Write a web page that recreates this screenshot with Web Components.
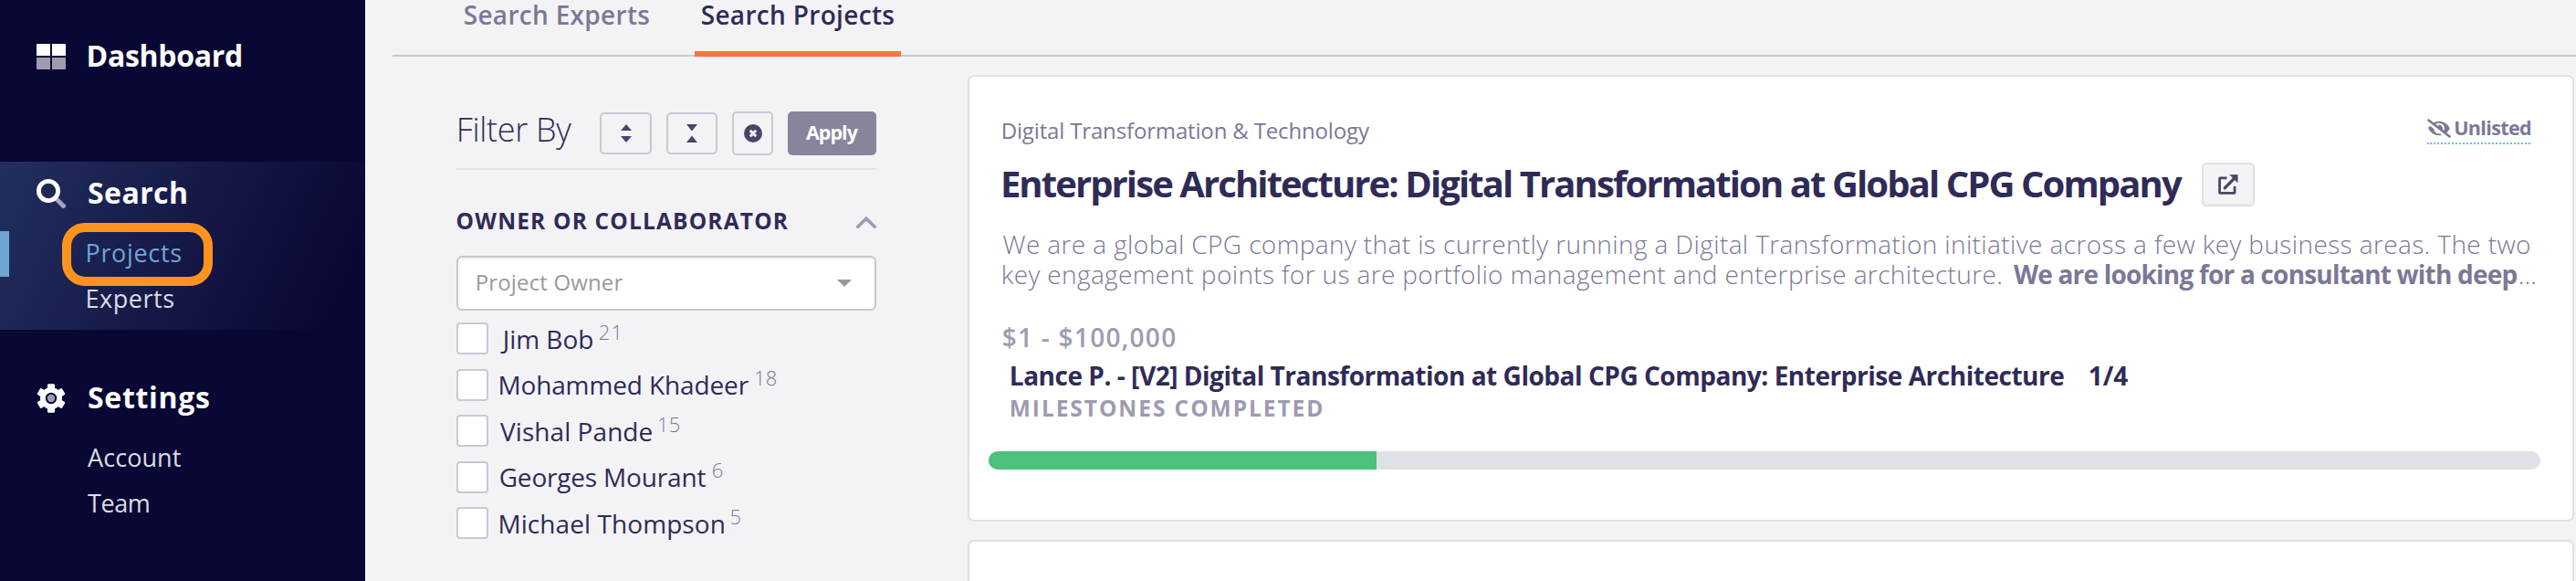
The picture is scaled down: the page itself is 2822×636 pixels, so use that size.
<!DOCTYPE html>
<html lang="en">
<head>
<meta charset="utf-8">
<title>Search Projects</title>
<style>
    body {
        margin: 0;
        width: 2822px;
        height: 636px;
        overflow: hidden;
        background: #f3f3f6;
        font-family: "Open Sans", "Noto Sans", sans-serif;
        color: #2f2b57;
    }
    .strong {
        font-weight: 700;
    }
    .ending {
        display: flex;
        gap: 4px;
    }
</style>
</head>
<body>
<app-shell>
    <side-nav slot="nav">
        <nav-group icon="dashboard" label="Dashboard" fit="167" style="height: 177px; --top: 41px"></nav-group>
        <nav-group icon="search" label="Search" fit="107" active style="height: 184px; --top: 14px">
            <nav-item fit="102" active highlight>Projects</nav-item>
            <nav-item fit="94">Experts</nav-item>
        </nav-group>
        <nav-group icon="settings" label="Settings" fit="132" style="--top: 54px">
            <nav-item fit="102">Account</nav-item>
            <nav-item fit="67">Team</nav-item>
        </nav-group>
    </side-nav>
    <tab-bar slot="tabs">
        <tab-item fit="202">Search Experts</tab-item>
        <tab-item fit="210" active>Search Projects</tab-item>
    </tab-bar>
    <filter-panel slot="filters">
        <filter-option fit="101" count="21" count-fit="20">Jim Bob</filter-option>
        <filter-option fit="272" count="18" count-fit="22">Mohammed Khadeer</filter-option>
        <filter-option fit="166" count="15" count-fit="22">Vishal Pande</filter-option>
        <filter-option fit="225" count="6" count-fit="11">Georges Mourant</filter-option>
        <filter-option fit="245" count="5" count-fit="11">Michael Thompson</filter-option>
    </filter-panel>
    <project-card>
        <text-run slot="category" fit="401">Digital Transformation &amp; Technology</text-run>
        <text-run slot="title" fit="1292">Enterprise Architecture: Digital Transformation at Global CPG Company</text-run>
        <text-run slot="summary" fit="1672">We are a global CPG company that is currently running a Digital Transformation initiative across a few key business areas. The two</text-run>
        <span slot="summary-end">
            <text-run fit="1093">key engagement points for us are portfolio management and enterprise architecture.</text-run>
            <span class="ending">
                <text-run class="strong" fit="551">We are looking for a consultant with deep</text-run>
                <text-run fit="19">…</text-run>
            </span>
        </span>
        <text-run slot="budget" fit="188">$1 - $100,000</text-run>
        <text-run slot="milestone" fit="1153">Lance P. - [V2] Digital Transformation at Global CPG Company: Enterprise Architecture</text-run>
        <text-run slot="progress" fit="42">1/4</text-run>
    </project-card>
    <project-card empty></project-card>
</app-shell>

<script>
const ICONS = {
    dashboard: `<svg width="32" height="28" viewBox="0 0 32 28">
        <path fill="#fff" d="M1 0h14v13H0V1a1 1 0 0 1 1-1zM17 0h14a1 1 0 0 1 1 1v12H17z"/>
        <path fill="#9e9bb0" d="M0 15h15v13H1a1 1 0 0 1-1-1zM17 15h15v12a1 1 0 0 1-1 1H17z"/>
    </svg>`,
    search: `<svg width="32" height="32" viewBox="0 0 32 32">
        <path d="M22.5 22.5l7 7" stroke="#a3a5bd" stroke-width="5" stroke-linecap="round"/>
        <circle cx="13" cy="13" r="10.6" fill="none" stroke="#fff" stroke-width="4.8"/>
    </svg>`,
    settings: `<svg width="32" height="32" viewBox="-16 -16 32 32">
        <g fill="#fff">
            <circle r="12"/>
            <rect x="-4" y="-15.7" width="8" height="31.4" rx="1.2"/>
            <rect x="-4" y="-15.7" width="8" height="31.4" rx="1.2" transform="rotate(60)"/>
            <rect x="-4" y="-15.7" width="8" height="31.4" rx="1.2" transform="rotate(120)"/>
        </g>
        <circle r="5.2" fill="#9e9bb0" stroke="#090733" stroke-width="2"/>
    </svg>`,
    expand: `<svg width="12" height="20" viewBox="0 0 12 20" fill="#4a4568">
        <path d="M6 0l6 7H0zM0 13h12l-6 7z"/>
    </svg>`,
    collapse: `<svg width="12" height="20" viewBox="0 0 12 20" fill="#4a4568">
        <path d="M0 0h12L6 7.5zM6 12.5l6 7.5H0z"/>
    </svg>`,
    clear: `<svg width="20" height="20" viewBox="0 0 20 20">
        <circle cx="10" cy="10" r="10" fill="#4a4568"/>
        <path d="M6.8 6.8l6.4 6.4M13.2 6.8l-6.4 6.4" stroke="#f3f3f6" stroke-width="3"/>
    </svg>`,
    chevron: `<svg width="22" height="13" viewBox="0 0 22 13">
        <path d="M1.8 11.2L11 2.2l9.2 9" fill="none" stroke="#9e9bb0" stroke-width="3.6" stroke-linecap="round"/>
    </svg>`,
    hidden: `<svg width="26" height="21" viewBox="0 0 640 512" fill="#7b7896">
        <path d="M320 400c-75.850 0-137.250-58.710-142.900-133.110L72.200 185.820c-13.790 17.300-26.480 35.590-36.720 55.590a32.350 32.350 0 0 0 0 29.190C89.710 376.410 197.070 448 320 448c26.910 0 52.870-4 77.890-10.460L346 397.390a144.130 144.130 0 0 1-26 2.610zm313.820 58.100l-110.550-85.440a331.250 331.250 0 0 0 81.250-102.070 32.350 32.350 0 0 0 0-29.190C550.290 135.590 442.930 64 320 64a308.150 308.150 0 0 0-147.320 37.700L45.460 3.370A16 16 0 0 0 23 6.180L3.370 31.450A16 16 0 0 0 6.180 53.900l588.360 454.730a16 16 0 0 0 22.460-2.810l19.640-25.270a16 16 0 0 0-2.820-22.450zM450.190 312.400l-39.300-30.400A94.750 94.750 0 0 0 416 256a94.760 94.760 0 0 0-121.310-92.210A47.650 47.650 0 0 1 304 192a46.640 46.640 0 0 1-1.540 10l-73.610-56.890A142.310 142.310 0 0 1 320 112a143.920 143.920 0 0 1 144 144c0 21.630-5.290 41.790-13.810 60.400z"/>
    </svg>`,
    external: `<svg width="22" height="22" viewBox="0 0 22 22" fill="none" stroke="#4a4568" stroke-width="2.8" stroke-linejoin="round">
        <path d="M9.5 3.9H2.3a.7.7 0 0 0-.7.7v15.1c0 .4.3.7.7.7h15.1c.4 0 .7-.3.7-.7V13"/>
        <path d="M7.2 14.8L17.5 4.5" stroke-width="3.2" stroke-linecap="round"/>
        <path d="M12.8.3h8.4v8.4l-8.4-8.4z" fill="#4a4568" stroke-width=".6"/>
    </svg>`
};

// A single line of text, tracked so that its glyphs span `fit` pixels
class TextRun extends HTMLElement {
    constructor() {
        super();
        this.attachShadow({ mode: 'open' });
        this.shadowRoot.innerHTML = `
            <style>
                :host {
                    display: block;
                    flex: none;
                    white-space: nowrap;
                    padding-bottom: 0.06em;
                }
            </style>
            <slot></slot>
        `;
    }

    connectedCallback() {
        const fit = Number(this.getAttribute('fit'));
        const text = this.textContent;
        const style = getComputedStyle(this);
        const ctx = document.createElement('canvas').getContext('2d');
        // glyph bounds come back as whole pixels, so measure at ten times the size
        ctx.font = `${style.fontWeight} ${parseFloat(style.fontSize) * 10}px ${style.fontFamily}`;
        const box = ctx.measureText(text);
        const left = box.actualBoundingBoxLeft / 10;
        const ink = box.actualBoundingBoxRight / 10 + left;
        if (text.length > 1) {
            this.style.letterSpacing = (fit - ink) / (text.length - 1) + 'px';
        }
        this.style.marginLeft = left + 'px';
        this.style.width = fit - left + 'px';
    }
}

class AppShell extends HTMLElement {
    constructor() {
        super();
        this.attachShadow({ mode: 'open' });
    }

    connectedCallback() {
        this.shadowRoot.innerHTML = `
            <style>
                :host {
                    display: grid;
                    grid-template-columns: 400px 1fr;
                    grid-template-rows: 636px;
                    height: 636px;
                    overflow: hidden;
                }
                .content {
                    display: grid;
                    grid-template-columns: 460px 1760px;
                    column-gap: 100px;
                    padding-left: 100px;
                }
                .results {
                    display: flex;
                    flex-direction: column;
                    gap: 20px;
                    padding-top: 20px;
                }
            </style>
            <slot name="nav"></slot>
            <main>
                <slot name="tabs"></slot>
                <div class="content">
                    <slot name="filters"></slot>
                    <div class="results"><slot></slot></div>
                </div>
            </main>
        `;
    }
}

class SideNav extends HTMLElement {
    constructor() {
        super();
        this.attachShadow({ mode: 'open' });
    }

    connectedCallback() {
        this.shadowRoot.innerHTML = `
            <style>
                :host {
                    display: flex;
                    flex-direction: column;
                    background: #090733;
                }
            </style>
            <slot></slot>
        `;
    }
}

class NavGroup extends HTMLElement {
    constructor() {
        super();
        this.attachShadow({ mode: 'open' });
    }

    connectedCallback() {
        this.shadowRoot.innerHTML = `
            <style>
                :host {
                    display: block;
                    box-sizing: border-box;
                    padding-top: var(--top);
                }
                :host([active]) {
                    background: linear-gradient(115deg, #222f5d 0%, #131443 60%, #090733 92%);
                }
                .heading {
                    display: grid;
                    grid-template-columns: 32px auto;
                    column-gap: 25px;
                    align-items: center;
                    height: 40px;
                    padding-left: 40px;
                    margin-bottom: 22px;
                    color: #fff;
                    font-size: 32px;
                    font-weight: 700;
                    line-height: 40px;
                }
                svg {
                    display: block;
                }
            </style>
            <div class="heading">
                ${ICONS[this.getAttribute('icon')]}
                <text-run fit="${this.getAttribute('fit')}">${this.getAttribute('label')}</text-run>
            </div>
            <slot></slot>
        `;
    }
}

class NavItem extends HTMLElement {
    constructor() {
        super();
        this.attachShadow({ mode: 'open' });
    }

    connectedCallback() {
        this.shadowRoot.innerHTML = `
            <style>
                :host {
                    display: block;
                    position: relative;
                    box-sizing: border-box;
                    height: 50px;
                    padding-left: 96px;
                    color: #dcdce3;
                    font-size: 27px;
                    line-height: 48px;
                }
                :host([active]) {
                    padding-left: 86px;
                    border-left: 10px solid #6ea5d5;
                    color: #6ea5d5;
                }
                .ring {
                    display: none;
                }
                :host([highlight]) .ring {
                    display: block;
                    position: absolute;
                    left: 58px;
                    top: -9px;
                    box-sizing: border-box;
                    width: 165px;
                    height: 69px;
                    border: 10px solid #ff931e;
                    border-radius: 25px;
                }
            </style>
            <text-run fit="${this.getAttribute('fit')}">${this.textContent}</text-run>
            <div class="ring"></div>
        `;
    }
}

class TabBar extends HTMLElement {
    constructor() {
        super();
        this.attachShadow({ mode: 'open' });
    }

    connectedCallback() {
        this.shadowRoot.innerHTML = `
            <style>
                :host {
                    display: flex;
                    gap: 42px;
                    height: 62px;
                    margin-left: 30px;
                    padding-left: 71px;
                    box-shadow: inset 0 -2px #cac8d3;
                }
            </style>
            <slot></slot>
        `;
    }
}

class TabItem extends HTMLElement {
    constructor() {
        super();
        this.attachShadow({ mode: 'open' });
    }

    connectedCallback() {
        this.shadowRoot.innerHTML = `
            <style>
                :host {
                    box-sizing: border-box;
                    height: 62px;
                    padding: 0 8px;
                    color: #7b7896;
                    font-size: 28px;
                    font-weight: 600;
                    line-height: 33px;
                }
                :host([active]) {
                    color: #2f2b57;
                    border-bottom: 6px solid #ff7340;
                }
            </style>
            <text-run fit="${this.getAttribute('fit')}">${this.textContent}</text-run>
        `;
    }
}

class FilterPanel extends HTMLElement {
    constructor() {
        super();
        this.attachShadow({ mode: 'open' });
    }

    connectedCallback() {
        this.shadowRoot.innerHTML = `
            <style>
                :host {
                    display: block;
                    padding-top: 60px;
                }
                svg {
                    display: block;
                }
                .toolbar {
                    display: flex;
                    align-items: center;
                    gap: 16px;
                    height: 48px;
                    padding: 0 0 14px 3px;
                    border-bottom: 2px solid #e1e1e8;
                }
                .name {
                    margin-right: auto;
                    padding-bottom: 7px;
                    font-size: 36px;
                    font-weight: 320;
                    line-height: 41px;
                }
                .button {
                    display: flex;
                    align-items: center;
                    justify-content: center;
                    box-sizing: border-box;
                    width: 57px;
                    height: 46px;
                    border: 2px solid #cac8d3;
                    border-radius: 5px;
                }
                .button.narrow {
                    width: 45px;
                    height: 48px;
                }
                .button.apply {
                    width: 97px;
                    height: 48px;
                    border: 0;
                    background: #87849b;
                    color: #fff;
                    font-size: 21.5px;
                    font-weight: 700;
                    line-height: 46px;
                }
                .heading {
                    display: flex;
                    align-items: center;
                    justify-content: space-between;
                    height: 40px;
                    padding-left: 1px;
                    margin: 37px 0 17px;
                    font-size: 24.5px;
                    font-weight: 700;
                    line-height: 40px;
                }
                .select {
                    display: flex;
                    align-items: center;
                    justify-content: space-between;
                    box-sizing: border-box;
                    height: 60px;
                    padding: 0 25px 0 21px;
                    margin-bottom: 5.25px;
                    border: 2px solid #c8c8c8;
                    border-radius: 6px;
                    background: #fff;
                    box-shadow: inset 0 2px 2px rgba(0, 0, 0, 0.06);
                    color: #999;
                    font-size: 24px;
                    font-weight: 370;
                    line-height: 54px;
                }
            </style>
            <div class="toolbar">
                <div class="name"><text-run fit="123">Filter By</text-run></div>
                <div class="button">${ICONS.expand}</div>
                <div class="button" style="width: 56px">${ICONS.collapse}</div>
                <div class="button narrow">${ICONS.clear}</div>
                <div class="button apply"><text-run fit="57">Apply</text-run></div>
            </div>
            <div class="heading">
                <text-run fit="362">OWNER OR COLLABORATOR</text-run>
                ${ICONS.chevron}
            </div>
            <div class="select">
                <text-run fit="159">Project Owner</text-run>
                <svg width="16" height="8" viewBox="0 0 16 8"><path d="M0 0h16L8 8z" fill="#999"/></svg>
            </div>
            <slot></slot>
        `;
    }
}

class FilterOption extends HTMLElement {
    constructor() {
        super();
        this.attachShadow({ mode: 'open' });
    }

    connectedCallback() {
        this.shadowRoot.innerHTML = `
            <style>
                :host {
                    display: flex;
                    align-items: center;
                    height: 50.5px;
                    font-size: 28px;
                    line-height: 40px;
                }
                .box {
                    box-sizing: border-box;
                    width: 35px;
                    height: 35px;
                    margin-right: 13px;
                    border: 2px solid #cac8d5;
                    border-radius: 4px;
                    background: #fff;
                }
                .label {
                    padding-top: 2px;
                }
                .count {
                    margin-left: 8px;
                    padding-bottom: 14px;
                    color: #7b7896;
                    font-size: 22px;
                    font-weight: 350;
                }
            </style>
            <div class="box"></div>
            <div class="label"><text-run fit="${this.getAttribute('fit')}">${this.textContent}</text-run></div>
            <div class="count"><text-run fit="${this.getAttribute('count-fit')}">${this.getAttribute('count')}</text-run></div>
        `;
    }
}

class ProjectCard extends HTMLElement {
    constructor() {
        super();
        this.attachShadow({ mode: 'open' });
    }

    connectedCallback() {
        this.shadowRoot.innerHTML = `
            <style>
                :host {
                    display: block;
                    box-sizing: border-box;
                    height: 489px;
                    flex: none;
                    padding: 43px 40px 0 36px;
                    border: 2px solid #e0e0e6;
                    border-radius: 7px;
                    background: #fff;
                }
                svg {
                    display: block;
                }
                .top {
                    display: flex;
                    justify-content: space-between;
                    height: 32px;
                    padding: 0 6px 0 1px;
                    color: #7b7896;
                    font-size: 24px;
                    font-weight: 370;
                    line-height: 32px;
                }
                .status {
                    display: flex;
                    align-items: center;
                    gap: 5px;
                    height: 27px;
                    padding-bottom: 2px;
                    border-bottom: 2px dotted #74b6ec;
                    font-size: 21.5px;
                    font-weight: 700;
                    line-height: 27px;
                }
                .title {
                    display: flex;
                    align-items: center;
                    gap: 21px;
                    height: 48px;
                    margin-top: 19px;
                    padding-left: 1px;
                    font-size: 40px;
                    font-weight: 700;
                    line-height: 46px;
                }
                .open {
                    display: flex;
                    align-items: center;
                    justify-content: center;
                    box-sizing: border-box;
                    width: 58px;
                    height: 48px;
                    border: 2px solid #e0e0e6;
                    border-radius: 5px;
                    background: #f3f3f6;
                }
                .summary {
                    height: 66px;
                    margin-top: 26px;
                    padding-left: 1px;
                    color: #7b7896;
                    font-size: 28px;
                    font-weight: 360;
                    line-height: 31.32px;
                }
                ::slotted([slot="summary-end"]) {
                    display: flex;
                    gap: 14px;
                }
                .budget {
                    height: 40px;
                    margin-top: 32px;
                    padding-left: 1px;
                    color: #9e9bb0;
                    font-size: 28px;
                    font-weight: 600;
                    line-height: 39px;
                }
                .milestone {
                    display: flex;
                    gap: 28px;
                    height: 40px;
                    margin-top: 2px;
                    padding-left: 10px;
                    font-size: 28px;
                    font-weight: 680;
                    line-height: 39px;
                }
                .caption {
                    height: 30px;
                    padding-left: 10px;
                    color: #9e9bb0;
                    font-size: 24.5px;
                    font-weight: 700;
                    line-height: 30px;
                }
                .bar {
                    height: 20px;
                    margin: 32px -5px 0 -15px;
                    border-radius: 10px;
                    background: #e0e1e6;
                    overflow: hidden;
                }
                .bar div {
                    width: 25%;
                    height: 100%;
                    background: #4dc07b;
                }
            </style>
        `;
        if (this.hasAttribute('empty')) return;
        this.shadowRoot.innerHTML += `
            <div class="top">
                <slot name="category"></slot>
                <div class="status">${ICONS.hidden}<text-run fit="82">Unlisted</text-run></div>
            </div>
            <div class="title">
                <slot name="title"></slot>
                <div class="open">${ICONS.external}</div>
            </div>
            <div class="summary">
                <slot name="summary"></slot>
                <slot name="summary-end"></slot>
            </div>
            <div class="budget"><slot name="budget"></slot></div>
            <div class="milestone">
                <slot name="milestone"></slot>
                <slot name="progress"></slot>
            </div>
            <div class="caption"><text-run fit="340">MILESTONES COMPLETED</text-run></div>
            <div class="bar"><div></div></div>
        `;
    }
}

customElements.define('app-shell', AppShell);
customElements.define('side-nav', SideNav);
customElements.define('nav-group', NavGroup);
customElements.define('nav-item', NavItem);
customElements.define('tab-bar', TabBar);
customElements.define('tab-item', TabItem);
customElements.define('filter-panel', FilterPanel);
customElements.define('filter-option', FilterOption);
customElements.define('project-card', ProjectCard);
// Measured last, once every ancestor has its styles
customElements.define('text-run', TextRun);
</script>
</body>
</html>
